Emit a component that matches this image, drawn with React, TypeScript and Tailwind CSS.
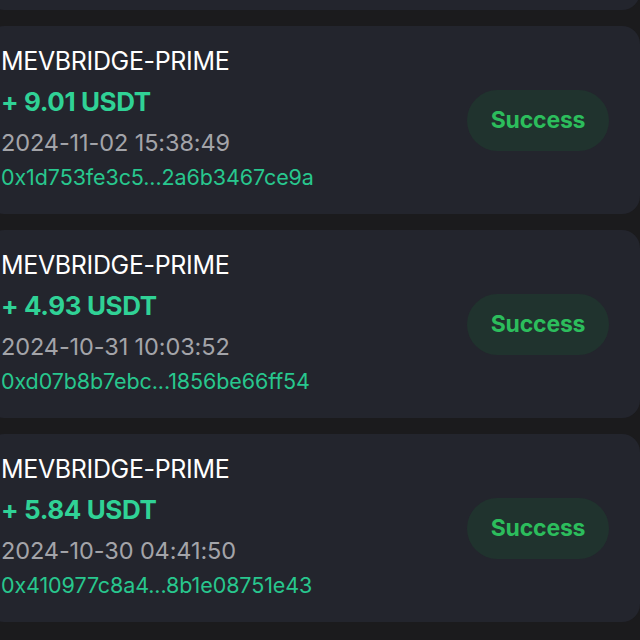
import React from 'react';

type Tx = {
  name: string;
  amount: string;
  time: string;
  hash: string;
};

const txs: Tx[] = [
  { name: 'MEVBRIDGE-PRIME', amount: '+ 9.01 USDT', time: '2024-11-02 15:38:49', hash: '0x1d753fe3c5...2a6b3467ce9a' },
  { name: 'MEVBRIDGE-PRIME', amount: '+ 4.93 USDT', time: '2024-10-31 10:03:52', hash: '0xd07b8b7ebc...1856be66ff54' },
  { name: 'MEVBRIDGE-PRIME', amount: '+ 5.84 USDT', time: '2024-10-30 04:41:50', hash: '0x410977c8a4...8b1e08751e43' },
];

const TxCard: React.FC<{ tx: Tx }> = ({ tx }) => (
  <div className="-ml-[14px] w-[654px] h-[188px] rounded-[18px] bg-[#23252d] flex items-center justify-between pl-[15px] pr-[31px]">
    <div className="flex flex-col pt-[15px] pb-[23px] h-full">
      <div className="text-[25px] leading-[40px] text-white tracking-[-0.35px]">{tx.name}</div>
      <div className="text-[26px] leading-[41px] font-bold text-[#30d296] tracking-[-0.4px]">{tx.amount}</div>
      <div className="text-[23.5px] leading-[41px] text-[#a3a4a9] tracking-[-0.1px]">{tx.time}</div>
      <div className="text-[21.5px] leading-[28px] text-[#28c78e] tracking-[-0.1px]">{tx.hash}</div>
    </div>
    <div className="w-[142px] h-[61px] rounded-full bg-[#20332e] flex items-center justify-center text-[23px] font-bold text-[#2cbd5c] tracking-[-0.2px]">
      Success
    </div>
  </div>
);

export default function App() {
  return (
    <div className="w-[640px] h-[640px] overflow-hidden bg-[#1b1b1d]" style={{ fontFamily: 'Inter, "Noto Sans", sans-serif' }}>
      <div className="flex flex-col gap-4 -mt-[178px]">
        <div className="-ml-[14px] w-[654px] h-[188px] rounded-[18px] bg-[#23252d]" />
        {txs.map((tx, i) => (
          <TxCard key={i} tx={tx} />
        ))}
      </div>
    </div>
  );
}
